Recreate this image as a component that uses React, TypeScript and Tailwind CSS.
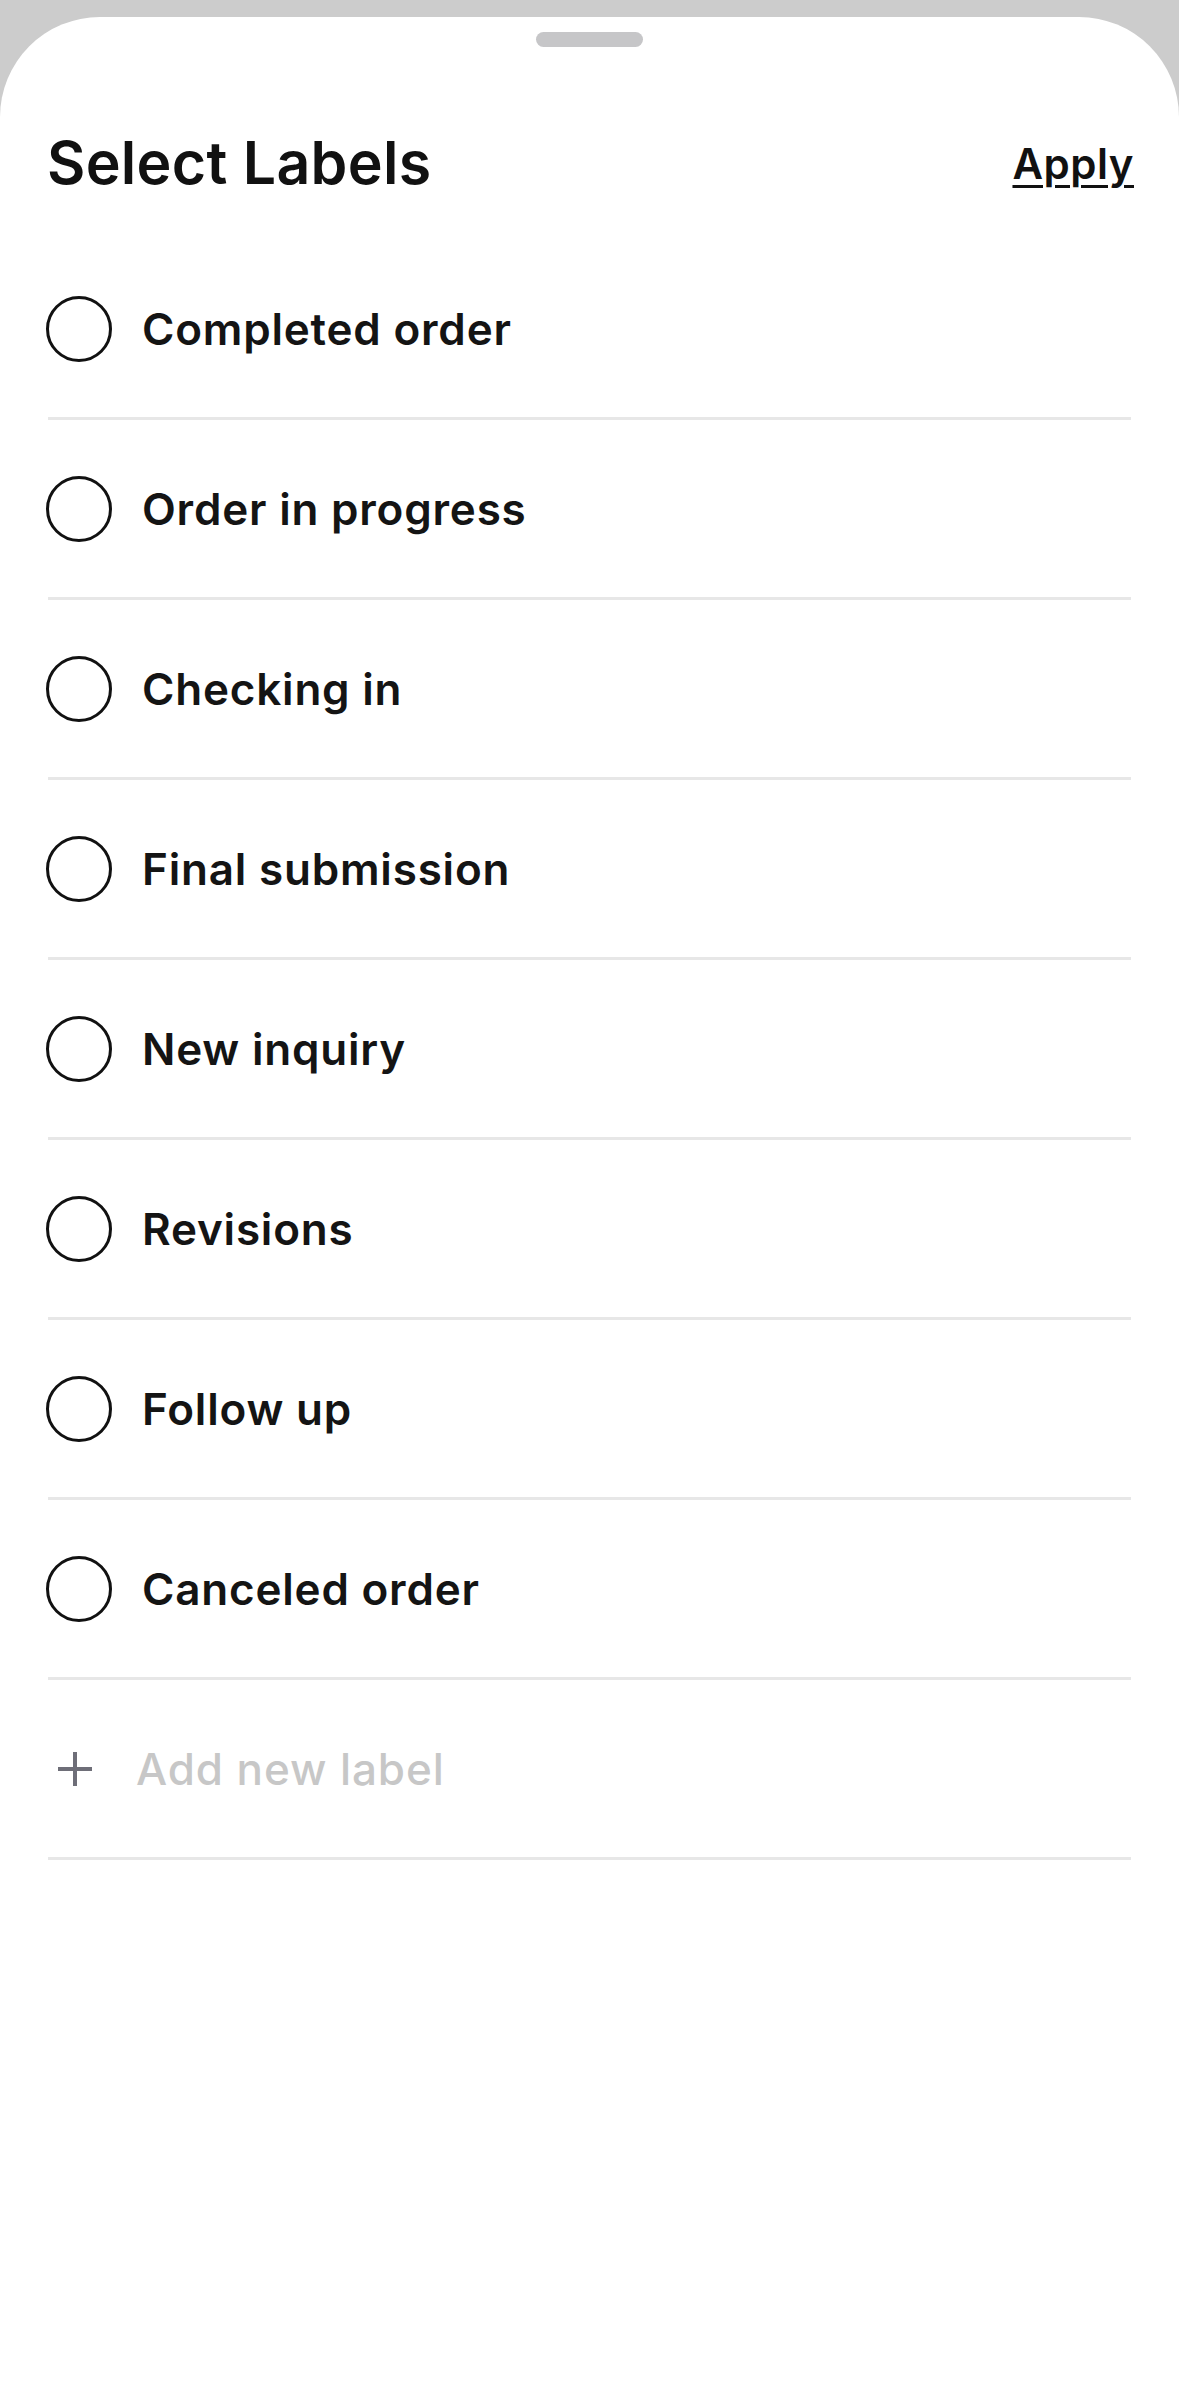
import React, { useState } from 'react';

const labels = [
  'Completed order',
  'Order in progress',
  'Checking in',
  'Final submission',
  'New inquiry',
  'Revisions',
  'Follow up',
  'Canceled order',
];

const LabelRow = ({ label, checked, onToggle }: { label: string; checked: boolean; onToggle: () => void }) => (
  <button
    onClick={onToggle}
    className="flex h-[180px] w-full items-center border-b-[3px] border-[#e7e7e7] text-left"
  >
    <span
      className={`-ml-[2px] flex h-[66px] w-[66px] flex-shrink-0 items-center justify-center rounded-full border-[3px] border-[#111111] ${
        checked ? 'bg-[#111111]' : ''
      }`}
    />
    <span className="ml-[30px] text-[44px] font-semibold tracking-[0.8px] text-[#141414]">{label}</span>
  </button>
);

export default function App() {
  const [selected, setSelected] = useState<string[]>([]);

  const toggle = (label: string) =>
    setSelected((prev) => (prev.includes(label) ? prev.filter((l) => l !== label) : [...prev, label]));

  return (
    <div className="min-h-[2396px] bg-[#cccccc] pt-[17px] font-[family-name:Inter,sans-serif]">
      <div className="min-h-[2379px] rounded-t-[100px] bg-white">
        {/* drag handle */}
        <div className="flex justify-center pt-[15px]">
          <div className="h-[15px] w-[107px] rounded-full bg-[#c6c6c8]" />
        </div>

        <div className="px-[48px]">
          {/* header */}
          <div className="flex h-[193px] items-center justify-between pt-[39px]">
            <h1 className="-ml-[1px] text-[59px] font-semibold tracking-[0.3px] text-[#111111]">Select Labels</h1>
            <button className="-mr-[3px] text-[42px] font-semibold tracking-[0.5px] text-[#111111] underline decoration-[3px] underline-offset-[6px]">
              Apply
            </button>
          </div>

          {/* labels */}
          {labels.map((label) => (
            <LabelRow key={label} label={label} checked={selected.includes(label)} onToggle={() => toggle(label)} />
          ))}

          {/* add new */}
          <div className="flex h-[180px] items-center border-b-[3px] border-[#e7e7e7]">
            <svg width="36" height="36" viewBox="0 0 36 36" className="ml-[9px] flex-shrink-0">
              <path d="M18 1v34M1 18h34" stroke="#6e6e78" strokeWidth="4" />
            </svg>
            <span className="ml-[43px] text-[44px] font-medium tracking-[0.9px] text-[#c7c7c7]">Add new label</span>
          </div>
        </div>
      </div>
    </div>
  );
}
